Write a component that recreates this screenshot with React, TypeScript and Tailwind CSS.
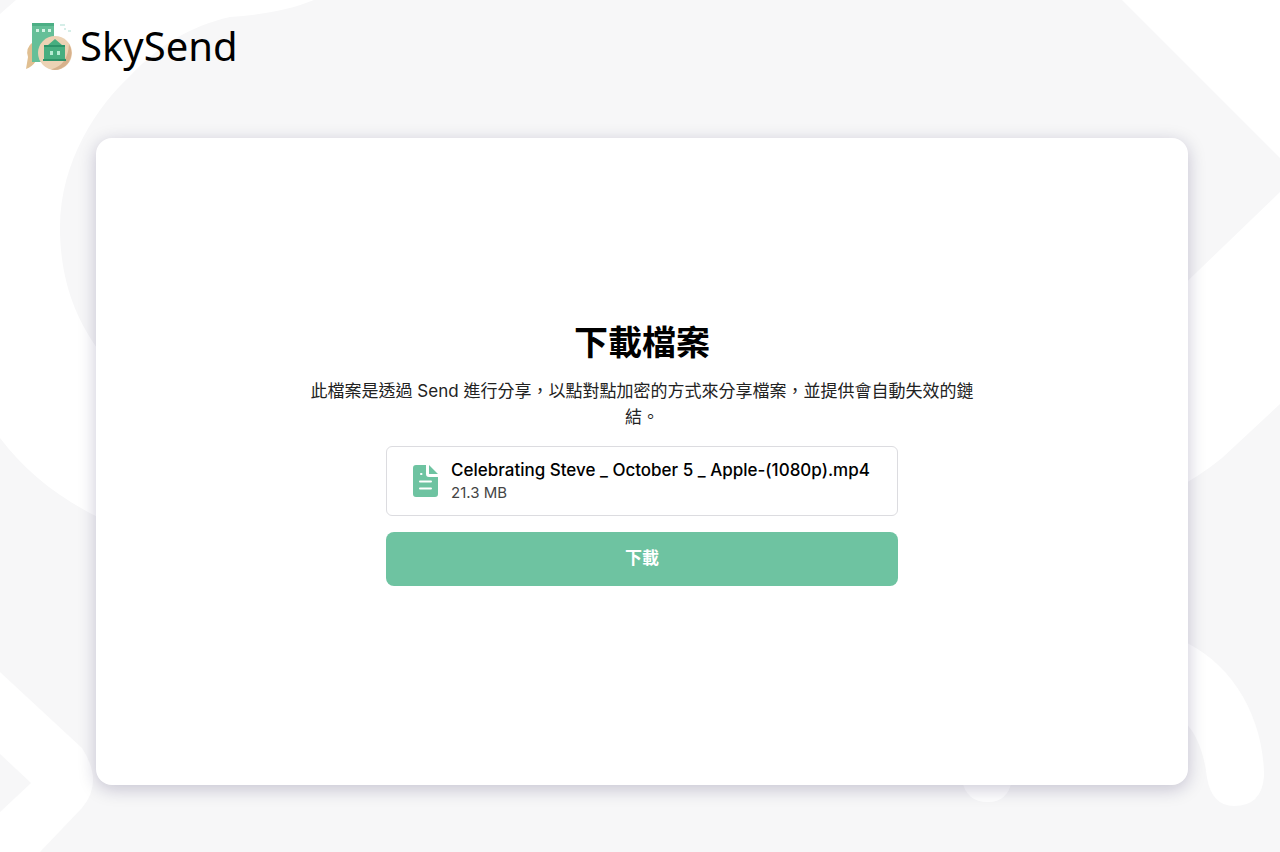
function Backdrop() {
  return (
    <svg className="absolute inset-0 -z-10 h-full w-full" viewBox="0 0 1280 852" preserveAspectRatio="xMidYMid slice" aria-hidden="true">
      <rect width="1280" height="852" fill="#f7f7f8" />
      <g fill="#fff">
        <path d="M16 0H314C290 10 260 15 230 17C190 26 158 46 130 76C98 106 60 160 60 228C60 280 76 320 100 352V518C58 498 24 470 0 438V14Z" />
        <path d="M1122 0H1280V158Z" />
        <path d="M1280 192V404L1222 458Q1200 476 1170 492V298Z" />
        <path d="M0 672L82 748Q104 782 82 808L40 852H0V812L31 783L0 754Z" />
        <path d="M1180 640C1230 660 1264 716 1264 776Q1262 806 1234 806Q1212 806 1207 778C1203 742 1190 722 1170 710Z" />
        <path d="M962 780Q966 802 988 802Q1008 802 1012 780Z" />
      </g>
    </svg>
  );
}

function Logo() {
  return (
    <svg className="h-12 w-12" viewBox="0 0 48 48" aria-hidden="true">
      <path d="M36 3h5M44 9h3M40 7h2" stroke="#d5eee8" strokeWidth="2" />
      <path d="M9 20Q1 26 4 35L2 47Q8 45 12 39L15 20Z" fill="#e0bf91" />
      <path d="M8 1H30V18L17 40H8Z" fill="#65bf98" />
      <path d="M8 1H30V4H8Z" fill="#4caf85" />
      <path d="M12 7h3v3h-3zM18 7h3v3h-3zM24 7h3v3h-3z" fill="#d2f3e3" />
      <circle cx="31" cy="31" r="17" fill="#ecd2b4" />
      <path d="M45 22A17 17 0 0 1 27 47.500Q44 43 45 22Z" fill="#d7b18c" />
      <path d="M31 17L38 23H41V39H20V23H24Z" fill="#47ae80" />
      <path d="M20 23H41V25H20ZM19 37H42V39H19Z" fill="#2d9369" />
      <path d="M26 29h3v4h-3zM33 29h3v4h-3z" fill="#b6ecd4" />
    </svg>
  );
}

function FileIcon() {
  return (
    <svg className="h-8 w-[25px] shrink-0" viewBox="0 0 25 32" aria-hidden="true">
      <path d="M3 0H13V9Q13 12 16 12H25V29Q25 32 22 32H3Q0 32 0 29V3Q0 0 3 0ZM16 0L25 9H16Z" fill="#6ec3a1" />
      <path d="M8 9h0.500M7 16.500h11M7 23.500h11" stroke="#fff" strokeWidth="2" strokeLinecap="round" />
    </svg>
  );
}

export default function App() {
  return (
    <div className="relative isolate flex min-h-screen flex-col overflow-hidden font-['Inter','Noto_Sans_CJK_TC',sans-serif] text-[17px] text-black">
      <Backdrop />
      <header className="flex px-6 pt-[22px]">
        <a href="#" className="flex items-center gap-2">
          <Logo />
          <span className="font-['Noto_Sans',sans-serif] text-[40px] leading-12">SkySend</span>
        </a>
      </header>
      <main className="mt-[68px] mr-[92px] mb-[67px] ml-24 flex flex-1 flex-col items-center justify-center rounded-2xl bg-white px-4 pb-4 shadow-[0_4px_18px_rgba(20,10,70,0.22)]">
        <section className="flex w-full max-w-[672px] flex-col items-center">
          <h1 className="text-[34px] leading-[42px] font-bold">下載檔案</h1>
          <p className="mt-[14px] text-center leading-[26px] text-[#222]">
            此檔案是透過 Send 進行分享，以點對點加密的方式來分享檔案，並提供會自動失效的鏈結。
          </p>
          <div className="mt-4 flex min-h-[70px] w-full max-w-[512px] items-center gap-[13px] rounded-md border border-[#dcdce0] px-[26px]">
            <FileIcon />
            <div>
              <p className="leading-6 font-medium">Celebrating Steve _ October 5 _ Apple-(1080p).mp4</p>
              <p className="text-[15px] leading-[22px] text-[#444]">21.3 MB</p>
            </div>
          </div>
          <button type="button" className="mt-4 h-[54px] w-full max-w-[512px] rounded-lg bg-[#6ec3a1] font-bold text-white">
            下載
          </button>
        </section>
      </main>
    </div>
  );
}
